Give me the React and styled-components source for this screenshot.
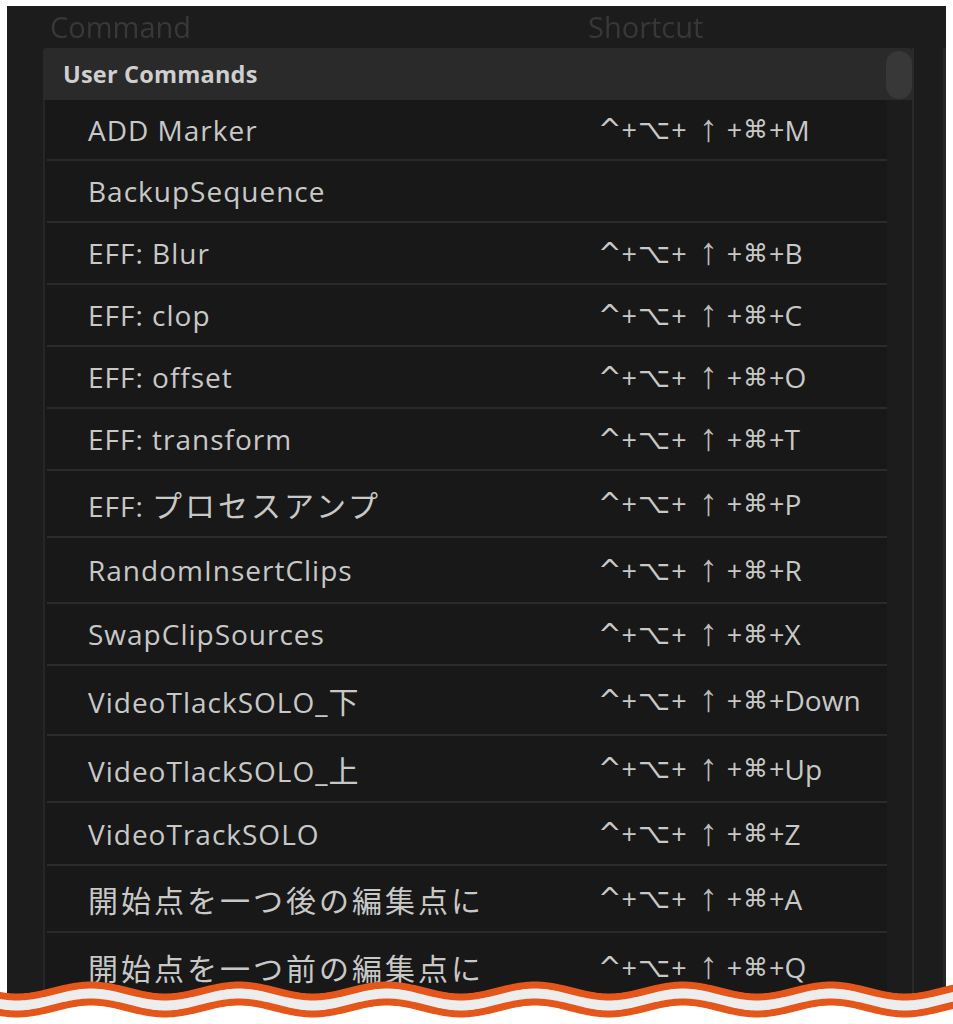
import React from "react";
import styled, { createGlobalStyle } from "styled-components";

const Global = createGlobalStyle`
  html, body { margin: 0; padding: 0; background: #ffffff; }
  body { font-family: "Open Sans", "Noto Sans CJK JP", sans-serif; overflow: hidden; }
`;

const Page = styled.div`
  position: relative;
  width: 953px;
  height: 1024px;
  overflow: hidden;
  background: #ffffff;
`;

const Panel = styled.div`
  margin: 6px 7px 0 7px;
  height: 1018px;
  background: #1c1c1c;
  display: flex;
  flex-direction: column;
  overflow: hidden;
`;

const ColumnHeads = styled.div`
  height: 42px;
  display: flex;
  align-items: center;
  flex-shrink: 0;
`;

const HeadLabel = styled.div`
  font-family: "Open Sans", sans-serif;
  font-size: 29px;
  color: #383838;
  position: relative;
  top: -1px;
  width: ${(p) => p.$w}px;
  padding-left: ${(p) => p.$pad}px;
  box-sizing: border-box;
  filter: blur(0.4px);
`;

const Body = styled.div`
  flex: 1;
  display: flex;
  padding-left: 36px;
`;

const ListArea = styled.div`
  position: relative;
  width: 869px;
  display: flex;
  flex-direction: column;
  border-right: 2px solid #2a2a2a;
`;

const Gutter = styled.div`
  flex: 1;
  border-right: 3px solid #262626;
`;

const GroupHeader = styled.div`
  height: 52px;
  background: #2a2a2a;
  border-radius: 3px 3px 0 0;
  display: flex;
  align-items: center;
  padding-left: 20px;
  font-family: "Open Sans", sans-serif;
  font-weight: 700;
  font-size: 23.5px;
  letter-spacing: 0.2px;
  color: #cfcfcf;
  flex-shrink: 0;
`;

const Thumb = styled.div`
  position: absolute;
  top: 3px;
  right: 0;
  width: 26px;
  height: 48px;
  border-radius: 13px;
  background: #383838;
`;

const Rows = styled.div`
  display: flex;
  flex-direction: column;
  width: 842px;
  border-left: 2px solid #262626;
  background: #181818;
  flex: 1;
`;

const Row = styled.div`
  height: ${(p) => p.$h}px;
  flex-shrink: 0;
  display: flex;
  align-items: center;
  border-bottom: 2px solid #2b2b2b;
  box-sizing: border-box;
  margin-left: 2px;
`;

const CommandName = styled.div`
  width: 510px;
  padding-left: 41px;
  font-family: "Open Sans", "Noto Sans CJK JP", sans-serif;
  font-size: 28px;
  letter-spacing: 1px;
  color: #c8c8c8;
  white-space: nowrap;
`;

const Jp = styled.span`
  font-family: "Noto Sans CJK JP", sans-serif;
  font-size: 30px;
  letter-spacing: 3px;
`;

const Shortcut = styled.div`
  font-family: "Open Sans", sans-serif;
  font-size: 28px;
  color: #c8c8c8;
  white-space: nowrap;
  display: flex;
  align-items: center;
  height: 40px;
`;

const Sym = styled.span`
  font-family: "DejaVu Sans", sans-serif;
  font-size: ${(p) => p.$size || 26}px;
  display: inline-block;
  margin: 0 ${(p) => p.$m || 0}px;
`;

const Arrow = styled.span`
  font-family: "Liberation Sans", sans-serif;
  font-size: 38px;
  line-height: 40px;
  display: inline-block;
  margin: 0 9px 0 12px;
  color: #bdbdbd;
  position: relative;
  top: -2px;
`;

const Plus = styled.span`
  font-family: "Open Sans", sans-serif;
  font-size: 27px;
`;

const ShortcutKeys = ({ k }) => (
  <Shortcut>
    <Sym $size={28}>^</Sym>
    <Plus>+</Plus>
    <Sym $size={28} $m={1}>⌥</Sym>
    <Plus>+</Plus>
    <Arrow>↑</Arrow>
    <Plus>+</Plus>
    <Sym $size={25} $m={1}>⌘</Sym>
    <Plus>+</Plus>
    <span>{k}</span>
  </Shortcut>
);

const rows = [
  { name: ["ADD Marker"], key: "M", h: 61 },
  { name: ["BackupSequence"], key: null, h: 62 },
  { name: ["EFF: Blur"], key: "B", h: 62 },
  { name: ["EFF: clop"], key: "C", h: 62 },
  { name: ["EFF: offset"], key: "O", h: 62 },
  { name: ["EFF: transform"], key: "T", h: 62 },
  { name: ["EFF: ", "プロセスアンプ"], key: "P", h: 67 },
  { name: ["RandomInsertClips"], key: "R", h: 66 },
  { name: ["SwapClipSources"], key: "X", h: 62 },
  { name: ["VideoTlackSOLO_", "下"], key: "Down", h: 70 },
  { name: ["VideoTlackSOLO_", "上"], key: "Up", h: 67 },
  { name: ["VideoTrackSOLO"], key: "Z", h: 63 },
  { name: ["", "開始点を一つ後の編集点に"], key: "A", h: 67 },
  { name: ["", "開始点を一つ前の編集点に"], key: "Q", h: 70 },
];

const WaveWrap = styled.div`
  position: absolute;
  left: 0;
  right: 0;
  bottom: 0;
  height: 56px;
  pointer-events: none;
`;

function wavePath(y0, amp, period, phase, width) {
  let d = "";
  for (let x = -4; x <= width + 4; x += 2) {
    const y = y0 - amp * Math.cos(((x - phase) / period) * Math.PI * 2);
    d += (d ? " L" : "M") + x + " " + y.toFixed(2);
  }
  return d;
}

const Wave = () => {
  const W = 953;
  const H = 56;
  const top = wavePath(23, 6, 148, 91, W);
  const bottom = wavePath(40, 6, 148, 91, W);
  return (
    <WaveWrap>
      <svg width={W} height={H} viewBox={`0 0 ${W} ${H}`}>
        <path d={`${top} L${W + 4} ${H} L-4 ${H} Z`} fill="#ededed" />
        <path d={`${bottom} L${W + 4} ${H} L-4 ${H} Z`} fill="#ffffff" />
        <path d={top} fill="none" stroke="#e4561a" strokeWidth="7" />
        <path d={bottom} fill="none" stroke="#e4561a" strokeWidth="7" />
      </svg>
    </WaveWrap>
  );
};

export default function App() {
  return (
    <Page>
      <Global />
      <Panel>
        <ColumnHeads>
          <HeadLabel $w={581} $pad={43}>Command</HeadLabel>
          <HeadLabel $w={300} $pad={0}>Shortcut</HeadLabel>
        </ColumnHeads>
        <Body>
          <ListArea>
            <GroupHeader>User Commands</GroupHeader>
            <Thumb />
            <Rows>
              {rows.map((r) => (
                <Row key={r.name.join("")} $h={r.h}>
                  <CommandName>
                    {r.name[0]}
                    {r.name[1] && <Jp>{r.name[1]}</Jp>}
                  </CommandName>
                  {r.key && <ShortcutKeys k={r.key} />}
                </Row>
              ))}
            </Rows>
          </ListArea>
          <Gutter />
        </Body>
      </Panel>
      <Wave />
    </Page>
  );
}
